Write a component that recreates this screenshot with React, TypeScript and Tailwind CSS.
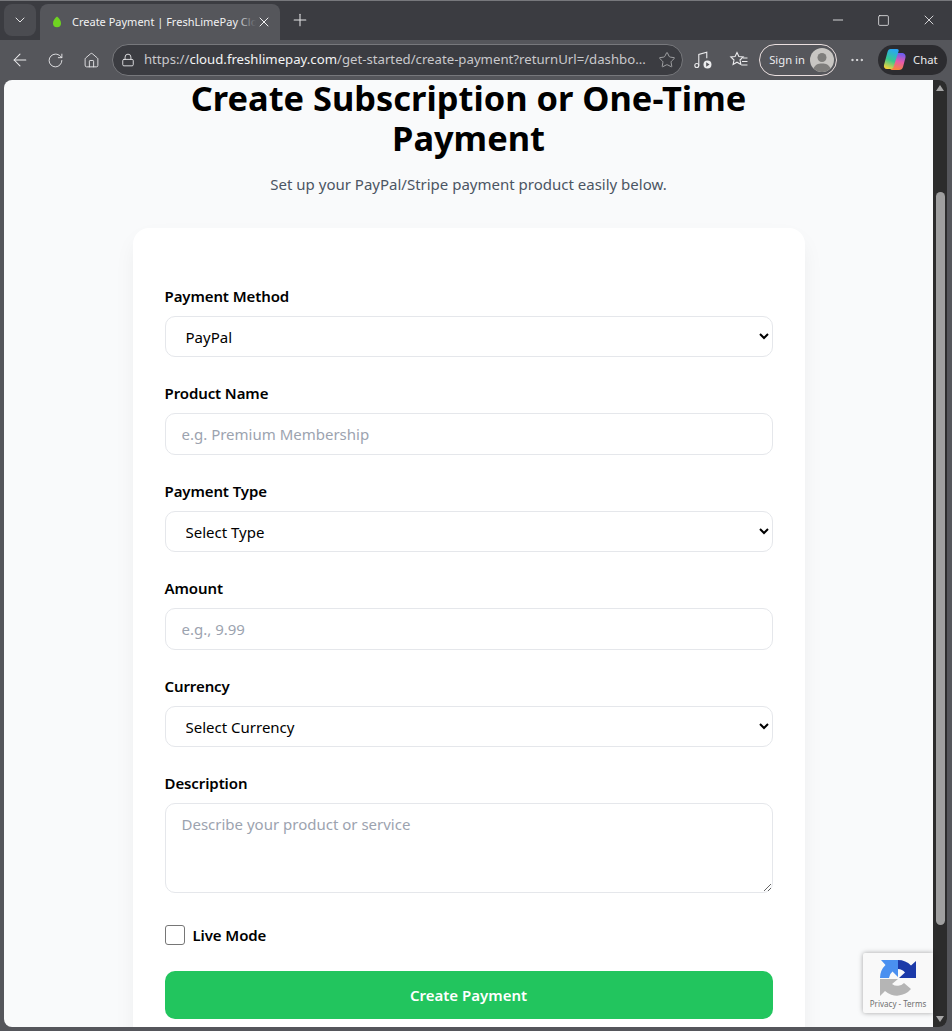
import React from 'react';
import { ArrowLeft, ChevronDown, House, Lock, Minus, MoreHorizontal, Plus, RotateCw, Square, Star, X } from 'lucide-react';

// ============================================
// Browser chrome
// ============================================
const CopilotLogo: React.FC = () => (
  <svg width="24" height="24" viewBox="0 0 24 24">
    <defs>
      <linearGradient id="cpA" x1="0.6" y1="0" x2="0.3" y2="1">
        <stop offset="0" stopColor="#2aa5f5" />
        <stop offset="0.55" stopColor="#36c98f" />
        <stop offset="1" stopColor="#f5d33a" />
      </linearGradient>
      <linearGradient id="cpB" x1="0.6" y1="0" x2="0.4" y2="1">
        <stop offset="0" stopColor="#6a5df2" />
        <stop offset="0.5" stopColor="#e85aa8" />
        <stop offset="1" stopColor="#f7863a" />
      </linearGradient>
    </defs>
    <path d="M14 5h4.5C21.5 5 23 7 22.5 9.5L20 19c-.5 2-2 3-4 3H9c-1.500 0-2-1-1.500-2.500L12 7c.4-1.200 1-2 2-2z" fill="url(#cpB)" />
    <path d="M7.5 1H14c1.500 0 2 1 1.500 2.500L10.500 19c-.5 1.500-1.500 2-3 2H4C1.500 21 .5 19 1 17L4.500 4C5 2 6 1 7.500 1z" fill="url(#cpA)" />
  </svg>
);

const TabBar: React.FC = () => (
  <div className="flex h-[40px] items-end border-t border-[#77787c] bg-[#3b3c41] pl-[4px] pr-[6px]">
    <div className="mb-[4px] flex h-[32px] w-[32px] items-center justify-center rounded-lg bg-[#4b4c51]">
      <ChevronDown size={16} strokeWidth={1.5} className="text-[#e4e4e6]" />
    </div>
    <div className="ml-[4px] flex h-[36px] w-[240px] items-center rounded-t-lg bg-[#55565b] pl-[12px] pr-[8px]">
      <svg width="10" height="12" viewBox="0 0 10 12" className="shrink-0">
        <path d="M5 .5C7.500 2.500 9 4.800 9 7.200A4 4 0 0 1 1 7.200C1 4.800 2.500 2.500 5 .5z" fill="#6fd321" />
      </svg>
      <div className="relative ml-[10px] w-[184px] overflow-hidden whitespace-nowrap text-[11px] text-[#f2f2f3]">
        Create Payment | FreshLimePay Cloud
        <div className="absolute inset-y-0 right-0 w-[20px] bg-gradient-to-r from-transparent to-[#55565b]" />
      </div>
      <X size={16} strokeWidth={1.5} className="shrink-0 text-[#f2f2f3]" />
    </div>
    <Plus size={20} strokeWidth={1.25} className="mb-[10px] ml-[10px] text-[#e4e4e6]" />
    <div className="mb-[12px] ml-auto flex items-center gap-[31px] pr-[9px] text-[#f2f2f3]">
      <Minus size={16} strokeWidth={1.25} />
      <Square size={13} strokeWidth={1.4} />
      <X size={16} strokeWidth={1.25} />
    </div>
  </div>
);

const ToolBar: React.FC = () => (
  <div className="flex h-[40px] items-center bg-[#55565b] pl-[10px] pr-[5px] text-[#ececee]">
    <ArrowLeft size={20} strokeWidth={1.25} />
    <RotateCw size={17} strokeWidth={1.25} className="ml-[17px]" />
    <House size={17} strokeWidth={1.25} className="ml-[19px]" />
    <div className="ml-[12px] flex h-[32px] w-[572px] items-center rounded-full border border-[#77787c] bg-[#3b3c41] pl-[8px] pr-[6px]">
      <Lock size={14} strokeWidth={1.5} />
      <div className="ml-[9px] flex-1 whitespace-nowrap text-[13.2px] text-[#c9c9cc]">
        https://<span className="text-[#f4f4f5]">cloud.freshlimepay.com</span>/get-started/create-payment?returnUrl=/dashbo...
      </div>
      <Star size={18} strokeWidth={1.25} className="text-[#a5a6a9]" />
    </div>
    <svg width="20" height="20" viewBox="0 0 20 20" className="ml-[10px]" fill="none" stroke="#ececee" strokeWidth="1.1">
      <circle cx="3.800" cy="15.500" r="2" />
      <path d="M5.800 15.500V4.500l8-2.300v6" />
      <circle cx="14.500" cy="14.500" r="4" fill="#ececee" stroke="none" />
      <path d="M13.200 12.300v4.400l3.400-2.200z" fill="#55565b" stroke="none" />
    </svg>
    <svg width="20" height="20" viewBox="0 0 20 20" className="ml-[16px]" fill="none" stroke="#ececee" strokeWidth="1.1">
      <path d="M8 2.500l1.900 4 4.300.5-3.200 3 .9 4.400L8 12.200 4.100 14.400 5 10 1.800 7l4.300-.5z" />
      <path d="M14 8h4.500M13 11.500h5.500M12.500 15h6" />
    </svg>
    <div className="ml-[10px] flex h-[32px] w-[78px] items-center justify-between rounded-full border border-[#eadfdf] pl-[9px] pr-[2px] text-[11.25px]">
      Sign in
      <svg width="24" height="24" viewBox="0 0 24 24">
        <circle cx="12" cy="12" r="12" fill="#c8c6c3" />
        <circle cx="12" cy="9.500" r="4.500" fill="#7f7e7c" />
        <path d="M3.500 20.500C5 16.800 8 15.500 12 15.500s7 1.300 8.500 5A12 12 0 0 1 3.500 20.500z" fill="#7f7e7c" />
      </svg>
    </div>
    <MoreHorizontal size={16} strokeWidth={1.5} className="ml-[12px]" />
    <div className="ml-[13px] flex h-[30px] w-[69px] items-center rounded-full bg-[#2c2c30] pl-[5px] text-[11.25px]">
      <CopilotLogo />
      <span className="ml-[6px]">Chat</span>
    </div>
  </div>
);

// ============================================
// Form
// ============================================
const labelClass = 'mb-[8px] block text-[15px] leading-[24px] font-semibold tracking-[-0.1px] text-black';
const fieldClass =
  'block w-full rounded-[10px] border border-[#e5e7eb] bg-white px-[16px] text-[15px] text-black outline-none placeholder:text-[#9ca3af]';

const SelectField: React.FC<{ label: string; value: string }> = ({ label, value }) => (
  <div>
    <label className={labelClass}>{label}</label>
    <select className={`${fieldClass} h-[41px]`} defaultValue={value}>
      <option>{value}</option>
    </select>
  </div>
);

const InputField: React.FC<{ label: string; placeholder: string }> = ({ label, placeholder }) => (
  <div>
    <label className={labelClass}>{label}</label>
    <input className={`${fieldClass} h-[42px]`} placeholder={placeholder} />
  </div>
);

const ScrollBar: React.FC = () => (
  <div className="flex w-[14px] shrink-0 flex-col items-center justify-between rounded-r-lg bg-[#2c2c2c] py-[5px]">
    <div className="h-0 w-0 border-x-[4px] border-b-[6px] border-x-transparent border-b-[#a6a6a6]" />
    <div className="mb-auto mt-[101px] h-[733px] w-[9px] rounded-full bg-[#9f9f9f]" />
    <div className="h-0 w-0 border-x-[4px] border-t-[6px] border-x-transparent border-t-[#a6a6a6]" />
  </div>
);

const RecaptchaBadge: React.FC = () => (
  <div className="absolute bottom-[14px] right-[14px] flex h-[60px] w-[70px] flex-col items-center rounded-l-[2px] bg-[#f9f9f9] pt-[6px] shadow-[0_0_5px_rgba(0,0,0,0.35)]">
    <svg width="38" height="38" viewBox="0 0 38 38">
      <path d="M1 19A18 18 0 0 1 6.500 6L2 1H19V18L13.500 12.500A9 9 0 0 0 10 19Z" fill="#4a90f0" />
      <path d="M19 1A18 18 0 0 1 32 6.500L37 2V19H20L26 13.500A9 9 0 0 0 19 10Z" fill="#1c3aa9" />
      <path d="M1 20V37L6 32A18 18 0 0 0 32 30L25 24A9 9 0 0 1 13 25L19 20Z" fill="#b5b5b5" />
    </svg>
    <div className="mt-[2px] whitespace-nowrap text-[8px] leading-[10px] text-[#6f6f6f]">Privacy - Terms</div>
  </div>
);

const App: React.FC = () => (
  <div className="flex h-[1031px] w-[952px] flex-col overflow-hidden bg-[#55565b] font-['Noto_Sans','Open_Sans',sans-serif]">
    <TabBar />
    <ToolBar />
    <div className="relative mb-[4px] ml-[4px] mr-[5px] flex min-h-0 flex-1 overflow-hidden rounded-lg">
      <div className="min-w-0 flex-1 overflow-hidden bg-[#f9fafb]">
        <div className="mx-auto w-[672px]">
          <h1 className="-mt-[2px] text-center text-[34.4px] leading-[40px] font-bold text-black">
            Create Subscription or One-Time Payment
          </h1>
          <p className="mt-[14px] text-center text-[15px] leading-[24px] text-[#4b5563]">
            Set up your PayPal/Stripe payment product easily below.
          </p>
          <div className="mt-[32px] flex flex-col gap-[24px] rounded-2xl bg-white px-[32px] pb-[32px] pt-[56px] shadow-[0_10px_25px_-5px_rgba(0,0,0,0.08)]">
            <SelectField label="Payment Method" value="PayPal" />
            <InputField label="Product Name" placeholder="e.g. Premium Membership" />
            <SelectField label="Payment Type" value="Select Type" />
            <InputField label="Amount" placeholder="e.g., 9.99" />
            <SelectField label="Currency" value="Select Currency" />
            <div>
              <label className={labelClass}>Description</label>
              <textarea className={`${fieldClass} h-[90px] pb-[8px] pt-[9px]`} placeholder="Describe your product or service" />
            </div>
            <label className="mt-[6px] flex h-[24px] items-center gap-[8px] text-[15px] font-semibold tracking-[-0.1px] text-black">
              <input type="checkbox" className="h-[20px] w-[20px] appearance-none rounded-[3px] border border-[#767676] bg-white" />
              Live Mode
            </label>
            <button className="h-[48px] rounded-[10px] bg-[#22c55e] text-[15px] font-semibold text-white">
              Create Payment
            </button>
          </div>
        </div>
      </div>
      <ScrollBar />
      <RecaptchaBadge />
    </div>
  </div>
);

export default App;
